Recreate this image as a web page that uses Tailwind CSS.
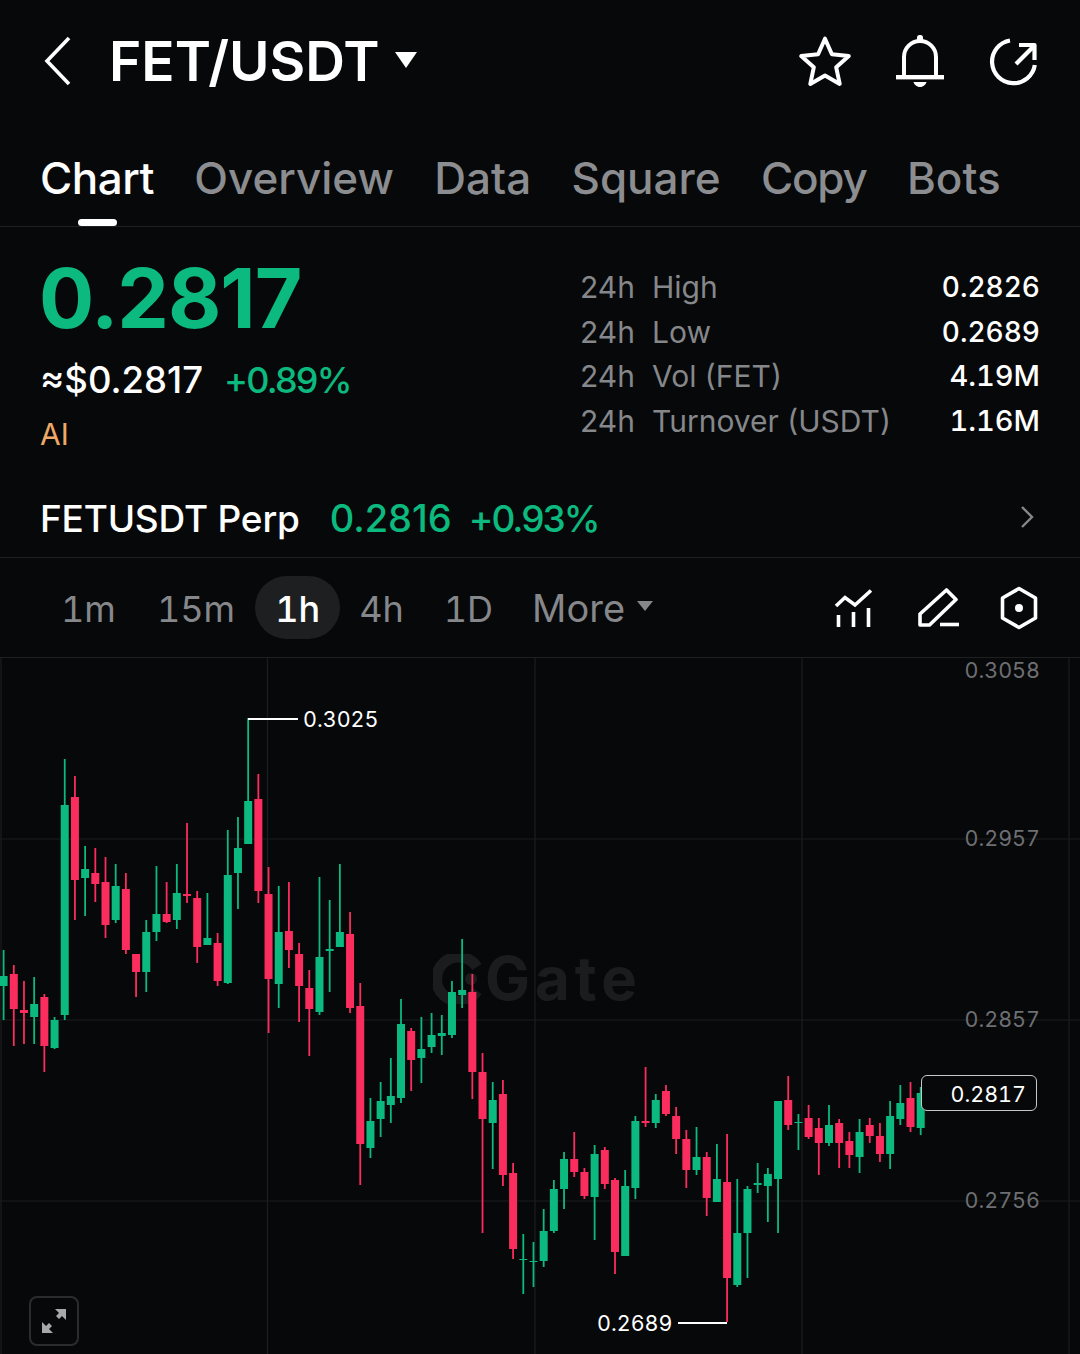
<!DOCTYPE html>
<html lang="en">
<head>
  <meta charset="UTF-8"/>
  <meta name="viewport" content="width=device-width, initial-scale=1.0"/>
  <title>FET/USDT</title>
  <script src="https://cdn.jsdelivr.net/npm/@tailwindcss/browser@4"></script>
</head>
<body class="bg-[#070809] text-white font-['Inter','Liberation_Sans',sans-serif]">
  <div class="w-[1080px] h-[1354px] overflow-hidden flex flex-col">

    <!-- Title bar -->
    <div class="h-[122px] shrink-0 flex items-center relative">
      <svg class="ml-[42px] mt-[-1px]" width="32" height="52" viewBox="0 0 32 52" fill="none" stroke="#fff" stroke-width="3.6">
        <path d="M27 3 L5 26 L27 49"/>
      </svg>
      <span class="ml-[35px] text-[55px] leading-none font-semibold">FET/USDT</span>
      <svg class="ml-[15px] mt-[-3px]" width="22" height="16" viewBox="0 0 22 16"><path d="M0 0 H22 L11 16 Z" fill="#fff"/></svg>
      <div class="ml-auto mr-[42px] flex items-center gap-[43px]">
        <svg width="54" height="54" viewBox="0 0 54 54" fill="none" stroke="#fff" stroke-width="4" stroke-linejoin="round">
          <path d="M27 4.700 L33.900 20.200 L50.800 22 L38.200 33.300 L41.700 49.900 L27 41.500 L12.300 49.900 L15.800 33.300 L3.200 22 L20.100 20.200 Z"/>
        </svg>
        <svg width="50" height="54" viewBox="0 0 50 54" fill="none">
          <path d="M9 43 V23 a16 16 0 0 1 32 0 V43" stroke="#fff" stroke-width="4"/>
          <rect x="22" y="1" width="6" height="6" rx="2.500" fill="#fff"/>
          <rect x="1" y="41" width="48" height="4.400" fill="#fff"/>
          <path d="M18.500 48 H31.500 C30.500 51.500 27.500 53 25 53 C22.500 53 19.500 51.500 18.500 48 Z" fill="#fff"/>
        </svg>
        <svg width="50" height="54" viewBox="0 0 50 54" fill="none" stroke="#fff" stroke-width="4.200">
          <path d="M22 6.500 A21.500 21.500 0 1 0 46.800 31"/>
          <path d="M28 30 L46 12"/>
          <path d="M31 11 H46.500 V26" stroke-linejoin="round"/>
        </svg>
      </div>
    </div>

    <!-- Tabs -->
    <div class="h-[105px] shrink-0 border-b border-[#1f2021] flex items-start pl-[40px] gap-[40.3px] text-[44px] leading-[112px] text-[#8b8d90] font-medium">
      <div class="relative h-full text-white tracking-[-0.5px]">Chart
        <div class="absolute left-[38px] bottom-0 w-[39px] h-[7px] rounded-full bg-white"></div>
      </div>
      <div>Overview</div>
      <div>Data</div>
      <div>Square</div>
      <div class="tracking-[-1.2px]">Copy</div>
      <div>Bots</div>
    </div>

    <!-- Price block -->
    <div class="h-[239px] shrink-0 flex pl-[40px] pr-[40px] relative">
      <div class="w-[540px] shrink-0 flex flex-col">
        <div class="mt-[28px] ml-[-1px] text-[82px] leading-[88px] font-bold tracking-[-1px] text-[#0cb97e]">0.2817</div>
        <div class="mt-[14px] flex items-baseline gap-[21px] text-[36.5px] leading-[46px]">
          <span class="font-medium">≈$0.2817</span>
          <span class="text-[36px] tracking-[-1.800px] text-[#0cb97e] font-medium">+0.89%</span>
        </div>
        <div class="mt-[13px] text-[30px] leading-[36px] text-[#efa868]">AI</div>
      </div>
      <div class="flex-1 mt-[38px] text-[30px] leading-[44.7px] text-[#85878a]">
        <div class="flex"><span class="w-[72px]">24h</span><span>High</span><span class="ml-auto text-[28px] text-white font-medium tabular-nums">0.2826</span></div>
        <div class="flex"><span class="w-[72px]">24h</span><span>Low</span><span class="ml-auto text-[28px] text-white font-medium tabular-nums">0.2689</span></div>
        <div class="flex"><span class="w-[72px]">24h</span><span>Vol (FET)</span><span class="ml-auto text-[29px] text-white font-medium tabular-nums">4.19M</span></div>
        <div class="flex"><span class="w-[72px]">24h</span><span>Turnover (USDT)</span><span class="ml-auto text-[29px] text-white font-medium tabular-nums">1.16M</span></div>
      </div>
    </div>

    <!-- Perp row -->
    <div class="h-[92px] shrink-0 border-b border-[#1f2021] flex items-baseline pt-[24px] pl-[40px] pr-[45px] text-[37px] leading-[56px] font-medium">
      <span class="tracking-[-0.200px]">FETUSDT Perp</span>
      <span class="ml-[30px] text-[38px] text-[#0cb97e]">0.2816</span>
      <span class="ml-[17px] tracking-[-2px] text-[#0cb97e]">+0.93%</span>
      <svg class="ml-auto self-start mt-[14px]" width="16" height="26" viewBox="0 0 16 26" fill="none" stroke="#85878a" stroke-width="2.4"><path d="M3 3 L13 13 L3 23"/></svg>
    </div>

    <!-- Interval row -->
    <div class="h-[100px] shrink-0 border-b border-[#1f2021] flex items-center pl-[41px] text-[36px] text-[#85878a]">
      <div class="flex items-center tabular-nums">
        <span class="px-[20px] pt-[2px]">1m</span>
        <span class="pl-[21px] pr-[20px] pt-[2px]">15m</span>
        <span class="h-[63px] w-[85px] rounded-full bg-[#1e1f20] text-white font-medium flex items-center justify-center pt-[2px]">1h</span>
        <span class="pl-[19px] pr-[19px] pt-[2px]">4h</span>
        <span class="pl-[21px] pr-[19px] pt-[2px]">1D</span>
        <span class="pl-[20px] pr-[21px] pt-[2px] text-[38px]">More</span>
        <svg class="ml-[-9px] mt-[-3px]" width="16" height="10" viewBox="0 0 16 10"><path d="M0 0 H16 L8 10 Z" fill="#85878a"/></svg>
      </div>
      <div class="ml-auto mr-[40px] flex items-center">
        <svg width="40" height="40" viewBox="0 0 40 40" fill="none" stroke="#fff" stroke-width="3.600">
          <path d="M2 18 L11 9.500 L21 17 L37 2.500"/>
          <path d="M4.500 27 V39 M19.500 24 V39 M34.500 20 V39"/>
        </svg>
        <svg class="ml-[44px]" width="42" height="40" viewBox="0 0 42 40" fill="none" stroke="#fff" stroke-width="3.600" stroke-linejoin="round">
          <path d="M2 37 V26 L28.500 2 L38 11.500 L11.500 37 Z"/>
          <path d="M22 36.500 H41"/>
        </svg>
        <svg class="ml-[38px]" width="42" height="44" viewBox="0 0 42 44" fill="none">
          <path d="M21 2.500 L37.500 12 V32 L21 41.500 L4.500 32 V12 Z" stroke="#fff" stroke-width="3.600" stroke-linejoin="round"/>
          <circle cx="21" cy="22" r="4" fill="#fff"/>
        </svg>
      </div>
    </div>

    <!-- Chart canvas: the svg origin is the top of the canvas at y=658 -->
    <div class="relative flex-1">
      <svg class="absolute inset-0" width="1080" height="696" viewBox="0 658 1080 696">
        <g stroke="#1c1d1e" stroke-width="1.200">
          <path d="M0 839 H1080 M0 1020 H1080 M0 1201 H1080"/>
          <path d="M1 658 V1354 M267.500 658 V1354 M535 658 V1354 M802 658 V1354 M1069 658 V1354"/>
        </g>
      </svg>

      <!-- Watermark, under the candles -->
      <div class="absolute left-[433px] top-[290px] flex items-center text-[#1b1c1d]">
        <svg class="mt-[2px]" width="50" height="50" viewBox="0 0 50 50" fill="none">
          <path d="M44 13 A22 22 0 1 0 44 37" stroke="#1b1c1d" stroke-width="11"/>
          <circle cx="38" cy="25" r="6" fill="#1b1c1d"/>
        </svg>
        <span class="ml-[2px] text-[60px] leading-none font-bold tracking-[5px]">Gate</span>
      </div>

      <svg id="candles" class="absolute inset-0" width="1080" height="696" viewBox="0 658 1080 696"></svg>

      <!-- Hi / low markers -->
      <div class="absolute left-[248px] top-[60px] w-[50px] h-[1.5px] bg-white"></div>
      <div class="absolute left-[303px] top-[49px] text-[21.5px] leading-[24px] tabular-nums">0.3025</div>
      <div class="absolute left-[678px] top-[664px] w-[49px] h-[1.5px] bg-white"></div>
      <div class="absolute left-[597px] top-[653px] text-[21.5px] leading-[24px] tabular-nums">0.2689</div>

      <!-- Axis labels -->
      <div class="absolute right-[40px] top-0 text-[21.5px] leading-[24px] text-[#6d6f72] tabular-nums">0.3058</div>
      <div class="absolute right-[40px] top-[168px] text-[21.5px] leading-[24px] text-[#6d6f72] tabular-nums">0.2957</div>
      <div class="absolute right-[40px] top-[349px] text-[21.5px] leading-[24px] text-[#6d6f72] tabular-nums">0.2857</div>
      <div class="absolute right-[40px] top-[530px] text-[21.5px] leading-[24px] text-[#6d6f72] tabular-nums">0.2756</div>

      <!-- Last price -->
      <div class="absolute left-[921px] top-[417px] w-[116px] h-[36px] rounded-[6px] border border-[#c8c8c8] bg-[#070809] text-[21.5px] leading-[36px] text-right pr-[10px] tabular-nums">0.2817</div>

      <!-- Fullscreen button -->
      <div class="absolute left-[29px] top-[638px] w-[50px] h-[50px] rounded-[8px] border-[2.5px] border-[#2b2c2d] flex items-center justify-center">
        <svg width="26" height="26" viewBox="0 0 26 26">
          <path d="M14 1 H25 V12 L21 8 L18 11 L15 8 L18 5 Z" fill="#a8a8a8"/>
          <path d="M12 25 H1 V14 L5 18 L8 15 L11 18 L8 21 Z" fill="#a8a8a8"/>
        </svg>
      </div>
    </div>
  </div>

  <script>
    // [up, wick top, body top, body bottom, wick bottom]
    const bars = [
      [1,950,976,986,1020],[0,965,974,1009,1046],[0,981,1010,1013,1044],[1,977,1004,1017,1044],[0,994,997,1046,1072],
      [1,1017,1020,1048,1049],[1,759,805,1015,1020],[0,776,797,880,920],[1,846,869,878,916],[0,848,873,884,902],
      [0,857,882,925,938],[1,864,886,920,923],[0,873,889,950,954],[0,954,954,972,997],[1,920,932,972,992],
      [1,866,914,932,941],[0,882,914,922,923],[1,864,893,920,929],[0,823,894,896,903],[0,891,898,947,963],
      [1,893,938,945,945],[0,933,943,981,986],[1,830,875,983,984],[1,817,848,873,909],[1,718,801,844,844],
      [0,774,799,891,903],[0,867,894,979,1033],[1,886,932,984,1008],[0,882,931,950,968],[0,943,954,986,1022],
      [0,970,988,1009,1056],[1,877,957,1012,1015],[1,900,949,951,992],[1,864,932,947,947],[0,912,934,1008,1013],
      [0,983,1006,1144,1185],[1,1098,1121,1148,1158],[1,1082,1101,1119,1137],[1,1058,1096,1105,1123],[1,999,1024,1098,1103],
      [0,1028,1031,1060,1091],[1,1017,1049,1058,1083],[1,1013,1035,1047,1053],[1,1015,1033,1036,1055],[1,981,992,1035,1038],
      [1,939,990,995,1008],[0,974,992,1072,1099],[0,1053,1072,1119,1233],[1,1082,1100,1123,1169],[0,1080,1094,1175,1186],
      [0,1163,1173,1249,1259],[1,1234,1259,1260,1294],[1,1242,1261,1262,1287],[1,1209,1231,1261,1267],[1,1180,1189,1231,1233],
      [1,1152,1159,1189,1209],[0,1132,1159,1172,1177],[0,1168,1172,1196,1199],[1,1145,1154,1197,1240],[0,1147,1150,1184,1189],
      [0,1178,1180,1252,1274],[1,1170,1186,1256,1256],[1,1116,1121,1188,1199],[0,1067,1121,1123,1127],[1,1094,1100,1123,1128],
      [0,1085,1091,1114,1116],[0,1107,1116,1139,1154],[0,1130,1139,1170,1188],[1,1127,1157,1170,1175],[0,1152,1157,1198,1216],
      [1,1144,1179,1202,1202],[0,1134,1182,1278,1322],[1,1179,1233,1285,1287],[1,1186,1189,1233,1278],[1,1163,1183,1185,1193],
      [1,1168,1174,1186,1222],[1,1101,1101,1179,1233],[0,1076,1100,1125,1130],[1,1114,1122,1123,1150],[0,1105,1118,1137,1139],
      [0,1118,1128,1143,1175],[1,1105,1125,1143,1146],[0,1119,1123,1143,1168],[0,1132,1141,1155,1168],[1,1119,1132,1157,1173],
      [0,1118,1125,1136,1143],[0,1123,1136,1154,1162],[1,1101,1116,1154,1169],[1,1085,1103,1119,1125],[0,1082,1098,1127,1132],
      [1,1087,1093,1128,1135]
    ];

    const ns = 'http://www.w3.org/2000/svg';
    const chart = document.getElementById('candles');

    function addRect(x, y, w, h, cls) {
      const r = document.createElementNS(ns, 'rect');
      r.setAttribute('x', x);
      r.setAttribute('y', y);
      r.setAttribute('width', w);
      r.setAttribute('height', Math.max(h, 0));
      r.setAttribute('class', cls);
      chart.appendChild(r);
    }

    bars.forEach((b, i) => {
      const cx = 3.6 + i * 10.19;
      const cls = b[0] ? 'fill-[#0cb97e]' : 'fill-[#fb2c5e]';
      addRect(cx - 0.9, b[1], 1.8, b[4] - b[1], cls);
      addRect(cx - 4, b[2], 8, b[3] - b[2], cls);
    });
  </script>
</body>
</html>
